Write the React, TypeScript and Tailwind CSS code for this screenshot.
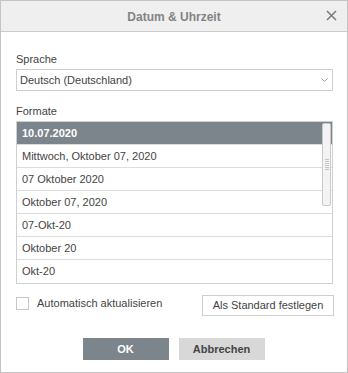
import React from "react";

const rows = [
  "10.07.2020",
  "Mittwoch, Oktober 07, 2020",
  "07 Oktober 2020",
  "Oktober 07, 2020",
  "07-Okt-20",
  "Oktober 20",
  "Okt-20",
];

export default function App() {
  return (
    <div
      className="w-[348px] h-[373px] border border-[#c4c4c4] bg-white flex flex-col text-[11px] text-[#444]"
      style={{ fontFamily: '"Liberation Sans", Arial, sans-serif' }}
    >
      <div className="relative h-[31px] shrink-0 bg-[#efefef] border-b border-[#cbcbcb] flex items-center justify-center">
        <span className="text-[12px] font-bold text-[#838383] leading-[14px] mt-[1px]">Datum &amp; Uhrzeit</span>
        <svg className="absolute left-[325px] top-[9px]" width="11" height="11" viewBox="0 0 11 11">
          <path d="M1 1 L10 10 M10 1 L1 10" stroke="#7a7a7a" strokeWidth="1.5" fill="none" />
        </svg>
      </div>
      <div className="flex flex-col pl-[15px] pt-[20px]">
        <div className="leading-[14px] h-[14px]">Sprache</div>
        <div className="mt-[3px] w-[317px] h-[22px] border border-[#cfcfcf] flex items-center justify-between pl-[3px] pr-[4px]">
          <span className="leading-[13px]">Deutsch (Deutschland)</span>
          <svg width="7" height="4" viewBox="0 0 7 4">
            <path d="M0.5 0.5 L3.5 3.5 L6.5 0.5" stroke="#9a9a9a" strokeWidth="1" fill="none" />
          </svg>
        </div>
        <div className="mt-[13px] leading-[14px] h-[14px]">Formate</div>
        <div className="relative mt-[3px] w-[317px] border border-[#cfcfcf] flex flex-col">
          {rows.map((r, i) => (
            <div
              key={r}
              className={
                "h-[23px] flex items-center pl-[5px] " +
                (i < rows.length - 1 ? "border-b border-[#dcdcdc] " : "") +
                (i === 0 ? "bg-[#7d858c] text-white font-bold" : "")
              }
            >
              <span className="leading-[13px]">{r}</span>
            </div>
          ))}
          <div className="absolute left-[305px] top-[1px] w-[9px] h-[83px] rounded-[2px] border border-[#cacaca] bg-[#f3f3f3] flex flex-col items-center justify-center gap-[1px]">
            {[0, 1, 2, 3, 4, 5].map((k) => (
              <div key={k} className="w-[4px] h-[1px] bg-[#c4c4c4]" />
            ))}
          </div>
        </div>
        <div className="mt-[11px] w-[318px] flex items-start justify-between">
          <div className="flex items-center mt-[2px] h-[13px]">
            <div className="w-[13px] h-[13px] border border-[#c8c8c8] bg-white" />
            <span className="ml-[8px] leading-[13px]">Automatisch aktualisieren</span>
          </div>
          <div className="w-[132px] h-[21px] border border-[#cfcfcf] bg-white flex items-center justify-center">
            <span className="leading-[13px]">Als Standard festlegen</span>
          </div>
        </div>
      </div>
      <div className="mt-[22px] flex justify-center gap-[10px] ml-[-1px]">
        <div className="w-[86px] h-[22px] bg-[#7d858c] text-white font-bold flex items-center justify-center">OK</div>
        <div className="w-[86px] h-[22px] bg-[#d8d8d8] text-[#444] font-bold flex items-center justify-center">Abbrechen</div>
      </div>
    </div>
  );
}
